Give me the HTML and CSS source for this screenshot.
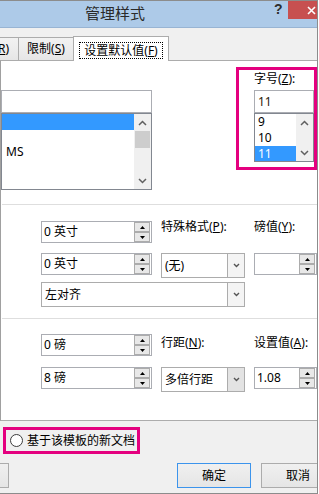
FILE: index.html
```html
<!DOCTYPE html>
<html lang="zh-CN">
<head>
<meta charset="utf-8">
<title>管理样式</title>
<link rel="stylesheet" href="styles.css">
</head>
<body>
<div class="dialog">
  <div class="titlebar">
    <span class="title">管理样式</span>
    <span class="help">?</span>
    <span class="close"><svg width="9" height="9" viewBox="0 0 9 9"><path d="M1 1L8 8M8 1L1 8" stroke="#fff" stroke-width="1.6" fill="none"/></svg></span>
  </div>
  <div class="tabs">
    <div class="tab tab-first">推荐(<u>R</u>)</div>
    <div class="tab tab-second">限制(<u>S</u>)</div>
    <div class="tab active"><span class="focus">设置默认值(<u>F</u>)</span></div>
  </div>
  <div class="panel">
    <div class="sec-top">
      <div class="fontcol">
        <div class="textbox"></div>
        <div class="listbox lb-big">
          <div class="items">
            <div class="item sel"></div>
            <div class="item short"></div>
            <div class="item">MS</div>
          </div>
          <div class="vscroll">
            <div class="sb-btn"><svg width="9" height="6" viewBox="0 0 9 6"><path d="M1 5L4.5 1.5L8 5" stroke="#606060" stroke-width="1.5" fill="none"/></svg></div>
            <div class="sb-track"><div class="thumb"></div></div>
            <div class="sb-btn"><svg width="9" height="6" viewBox="0 0 9 6"><path d="M1 1L4.5 4.5L8 1" stroke="#606060" stroke-width="1.5" fill="none"/></svg></div>
          </div>
        </div>
      </div>
      <div class="sizebox">
        <div class="lbl size-lbl">字号(<u>Z</u>):</div>
        <div class="textbox size">11</div>
        <div class="listbox lb-small">
          <div class="items">
            <div class="item">9</div>
            <div class="item">10</div>
            <div class="item sel">11</div>
          </div>
          <div class="vscroll">
            <div class="sb-btn"><svg width="9" height="6" viewBox="0 0 9 6"><path d="M1 5L4.5 1.5L8 5" stroke="#606060" stroke-width="1.5" fill="none"/></svg></div>
            <div class="sb-track"></div>
            <div class="sb-btn"><svg width="9" height="6" viewBox="0 0 9 6"><path d="M1 1L4.5 4.5L8 1" stroke="#606060" stroke-width="1.5" fill="none"/></svg></div>
          </div>
        </div>
      </div>
    </div>
    <div class="sep"></div>
    <div class="grid mid">
      <div class="spin">
        <span class="spin-text">0 英寸</span>
        <span class="spin-btns">
          <span class="spin-btn"><svg width="5" height="3" viewBox="0 0 5 3"><path d="M0 3L2.5 0L5 3Z" fill="#000"/></svg></span>
          <span class="spin-btn"><svg width="5" height="3" viewBox="0 0 5 3"><path d="M0 0L2.5 3L5 0Z" fill="#000"/></svg></span>
        </span>
      </div>
      <div class="lbl lbl-mid">特殊格式(<u>P</u>):</div>
      <div class="lbl lbl-mid">磅值(<u>Y</u>):</div>

      <div class="spin">
        <span class="spin-text">0 英寸</span>
        <span class="spin-btns">
          <span class="spin-btn"><svg width="5" height="3" viewBox="0 0 5 3"><path d="M0 3L2.5 0L5 3Z" fill="#000"/></svg></span>
          <span class="spin-btn"><svg width="5" height="3" viewBox="0 0 5 3"><path d="M0 0L2.5 3L5 0Z" fill="#000"/></svg></span>
        </span>
      </div>
      <div class="combo">
        <span class="combo-text">(无)</span>
        <span class="combo-btn"><svg width="7" height="5" viewBox="0 0 7 5"><path d="M1 1L3.5 3.5L6 1" stroke="#555" stroke-width="1.4" fill="none"/></svg></span>
      </div>
      <div class="spin">
        <span class="spin-text"></span>
        <span class="spin-btns">
          <span class="spin-btn"><svg width="5" height="3" viewBox="0 0 5 3"><path d="M0 3L2.5 0L5 3Z" fill="#000"/></svg></span>
          <span class="spin-btn"><svg width="5" height="3" viewBox="0 0 5 3"><path d="M0 0L2.5 3L5 0Z" fill="#000"/></svg></span>
        </span>
      </div>

      <div class="combo span2">
        <span class="combo-text">左对齐</span>
        <span class="combo-btn"><svg width="7" height="5" viewBox="0 0 7 5"><path d="M1 1L3.5 3.5L6 1" stroke="#555" stroke-width="1.4" fill="none"/></svg></span>
      </div>
    </div>
    <div class="sep"></div>
    <div class="grid bot">
      <div class="spin">
        <span class="spin-text">0 磅</span>
        <span class="spin-btns">
          <span class="spin-btn"><svg width="5" height="3" viewBox="0 0 5 3"><path d="M0 3L2.5 0L5 3Z" fill="#000"/></svg></span>
          <span class="spin-btn"><svg width="5" height="3" viewBox="0 0 5 3"><path d="M0 0L2.5 3L5 0Z" fill="#000"/></svg></span>
        </span>
      </div>
      <div class="lbl lbl-bot">行距(<u>N</u>):</div>
      <div class="lbl lbl-bot">设置值(<u>A</u>):</div>

      <div class="spin">
        <span class="spin-text">8 磅</span>
        <span class="spin-btns">
          <span class="spin-btn"><svg width="5" height="3" viewBox="0 0 5 3"><path d="M0 3L2.5 0L5 3Z" fill="#000"/></svg></span>
          <span class="spin-btn"><svg width="5" height="3" viewBox="0 0 5 3"><path d="M0 0L2.5 3L5 0Z" fill="#000"/></svg></span>
        </span>
      </div>
      <div class="combo">
        <span class="combo-text">多倍行距</span>
        <span class="combo-btn dark"><svg width="7" height="5" viewBox="0 0 7 5"><path d="M1 1L3.5 3.5L6 1" stroke="#555" stroke-width="1.4" fill="none"/></svg></span>
      </div>
      <div class="spin">
        <span class="spin-text">1.08</span>
        <span class="spin-btns">
          <span class="spin-btn"><svg width="5" height="3" viewBox="0 0 5 3"><path d="M0 3L2.5 0L5 3Z" fill="#000"/></svg></span>
          <span class="spin-btn"><svg width="5" height="3" viewBox="0 0 5 3"><path d="M0 0L2.5 3L5 0Z" fill="#000"/></svg></span>
        </span>
      </div>
    </div>
  </div>
  <div class="footer">
    <div class="callout"><span class="radio"></span><span>基于该模板的新文档</span></div>
    <div class="buttons">
      <div class="btn btn-cut"></div>
      <div class="btn btn-default">确定</div>
      <div class="btn btn-cancel">取消</div>
    </div>
  </div>
</div>
</body>
</html>
```
FILE: styles.css
```css
body {
  margin: 0;
  width: 319px;
  height: 494px;
  overflow: hidden;
  background: #ffffff;
  font-family: "Noto Sans", "Noto Sans CJK SC", sans-serif;
  font-size: 12px;
  color: #000;
}

.dialog {
  width: 318px;
  height: 494px;
  box-sizing: border-box;
  border-top: 1px solid #8c8c8c;
  border-right: 1px solid #8c8c8c;
  border-bottom: 1px solid #8c8c8c;
  background: #f0f0f0;
  overflow: hidden;
  display: flex;
  flex-direction: column;
}

/* title bar */
.titlebar {
  height: 26px;
  flex: none;
  background: #adcae8;
  border-bottom: 1px solid #98b4d3;
  display: flex;
  align-items: flex-start;
}
.title {
  margin-left: 85px;
  margin-top: 3px;
  font-size: 15px;
  line-height: 18px;
  color: #2a2a2a;
}
.help {
  margin-left: auto;
  margin-top: 1px;
  width: 8px;
  margin-right: 6px;
  text-align: center;
  font-size: 14px;
  font-weight: bold;
  line-height: 14px;
  color: #2e2e2e;
  font-family: "Liberation Sans", sans-serif;
}
.close {
  flex: none;
  width: 46px;
  height: 18px;
  margin-right: -17px;
  background: #c75050;
  display: flex;
  align-items: center;
  justify-content: center;
}

/* tabs */
.tabs {
  height: 32px;
  flex: none;
  display: flex;
  align-items: flex-end;
}
.tab {
  flex: none;
  box-sizing: border-box;
  height: 23px;
  border: 1px solid #acacac;
  border-bottom: none;
  background: linear-gradient(#f2f2f2, #e6e6e6);
  display: flex;
  align-items: center;
  justify-content: center;
  line-height: 14px;
  white-space: nowrap;
}
.tab-first {
  width: 59px;
  margin-left: -40px;
  justify-content: flex-end;
  padding-right: 9px;
}
.tab-second {
  width: 55px;
  border-left: none;
}
.tab.active {
  width: 96px;
  height: 25px;
  margin-left: -1px;
  margin-bottom: -1px;
  background: #ffffff;
  position: relative;
  z-index: 1;
  padding-top: 2px;
}
.focus {
  border: 1px dotted #000;
  padding: 1px 4px;
  line-height: 13px;
}

/* panel */
.panel {
  flex: none;
  height: 361px;
  box-sizing: border-box;
  background: #ffffff;
  border-top: 1px solid #acacac;
  border-left: 1px solid #a0a0a0;
  border-bottom: 1px solid #acacac;
  display: flex;
  flex-direction: column;
}
.sec-top {
  flex: none;
  height: 143px;
  display: flex;
  align-items: flex-start;
}
.fontcol {
  width: 151px;
  padding-top: 29px;
}
.textbox {
  box-sizing: border-box;
  height: 23px;
  border: 1px solid #abadb3;
  background: #fff;
  padding-left: 5px;
  line-height: 21px;
}
.listbox {
  box-sizing: border-box;
  border: 1px solid #828790;
  background: #fff;
  display: flex;
  overflow: hidden;
}
.lb-big { height: 77px; }
.items {
  flex: 1;
  min-width: 0;
}
.item {
  height: 16px;
  line-height: 16px;
  padding-left: 4px;
}
.item.short { height: 14px; }
.item.sel {
  background: #3399ff;
  color: #fff;
}
.vscroll {
  width: 17px;
  flex: none;
  background: #f0f0f0;
  display: flex;
  flex-direction: column;
}
.sb-btn {
  height: 17px;
  flex: none;
  display: flex;
  align-items: center;
  justify-content: center;
}
.sb-track { flex: 1; }
.thumb {
  margin: 0 1px;
  height: 17px;
  background: #cdcdcd;
}

.sizebox {
  margin-left: 84px;
  margin-top: 6px;
  width: 81px;
  height: 103px;
  box-sizing: border-box;
  border: 3px solid #e4007f;
  padding: 1px 0 0 15px;
}
.size-lbl { margin-bottom: 3px; }
.textbox.size {
  width: 60px;
  padding-left: 3px;
  color: #2a1a08;
}
.lb-small {
  width: 60px;
  height: 49px;
}
.lb-small .item { padding-left: 3px; }

.sep {
  flex: none;
  height: 1px;
  margin-left: 1px;
  background: #dedede;
}

/* form grids */
.grid {
  flex: none;
  box-sizing: border-box;
  display: grid;
  grid-template-columns: 111px 84px 63px;
  column-gap: 9px;
  padding-left: 40px;
  align-items: start;
}
.mid {
  height: 113px;
  padding-top: 16px;
  grid-template-rows: 32px 29px 36px;
}
.bot {
  height: 101px;
  padding-top: 15px;
  grid-template-rows: 33px 53px;
}
.lbl {
  line-height: 16px;
  white-space: nowrap;
}
.lbl-mid { margin-top: -2px; }
.lbl-bot { margin-top: 1px; }

.spin {
  box-sizing: border-box;
  height: 22px;
  border: 1px solid #abadb3;
  background: #fff;
  display: flex;
}
.spin-text {
  flex: 1;
  padding-left: 2px;
  line-height: 20px;
  white-space: nowrap;
}
.spin-btns {
  flex: none;
  width: 16px;
  margin-right: 1px;
  display: flex;
  flex-direction: column;
}
.spin-btn {
  flex: 1;
  box-sizing: border-box;
  border: 1px solid #acacac;
  background: #e8e8e8;
  display: flex;
  align-items: center;
  justify-content: center;
}

.combo {
  box-sizing: border-box;
  height: 25px;
  border: 1px solid #acacac;
  background: #fff;
  display: flex;
}
.combo.span2 { grid-column: 1 / 3; }
.combo-text {
  flex: 1;
  padding-left: 3px;
  line-height: 23px;
  white-space: nowrap;
}
.combo-btn {
  flex: none;
  width: 16px;
  border-left: 1px solid #acacac;
  background: #f4f4f4;
  display: flex;
  align-items: center;
  justify-content: center;
}
.combo-btn.dark { background: #e3e3e3; }

/* footer */
.footer {
  flex: 1;
  display: flex;
  flex-direction: column;
}
.callout {
  margin: 6px 0 0 3px;
  width: 137px;
  height: 27px;
  box-sizing: border-box;
  border: 3px solid #e4007f;
  display: flex;
  align-items: center;
  padding-left: 4px;
  gap: 4px;
  white-space: nowrap;
  line-height: 16px;
}
.radio {
  flex: none;
  width: 13px;
  height: 13px;
  box-sizing: border-box;
  border-radius: 50%;
  border: 1px solid #3c3c3c;
  background: #fff;
}
.buttons {
  display: flex;
  margin-top: 9px;
}
.btn {
  flex: none;
  width: 74px;
  height: 25px;
  box-sizing: border-box;
  border: 1px solid #acacac;
  background: linear-gradient(#f0f0f0, #e5e5e5);
  display: flex;
  align-items: center;
  justify-content: center;
  line-height: 16px;
}
.btn-cut { margin-left: -65px; }
.btn-default {
  margin-left: 168px;
  border-color: #3c94ec;
}
.btn-cancel { margin-left: 10px; }
```
